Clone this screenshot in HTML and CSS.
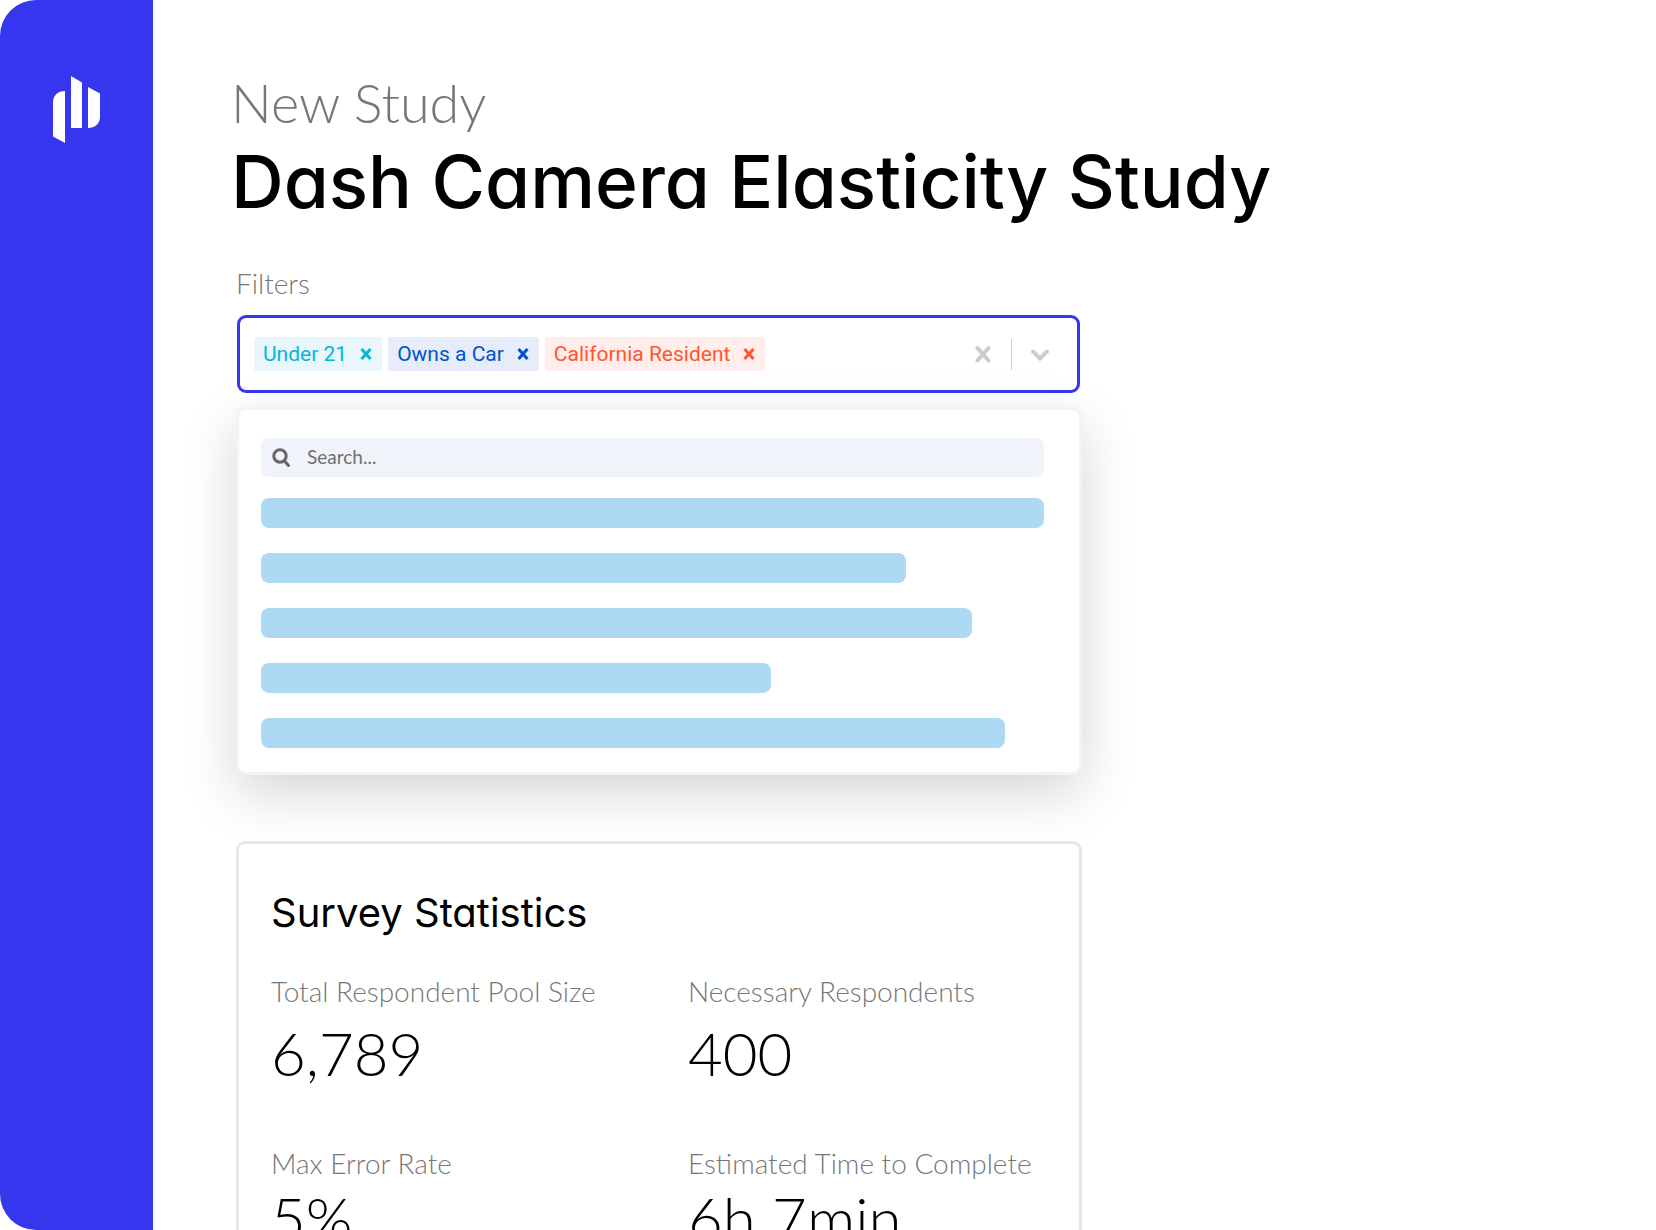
FILE: index.html
```html
<!DOCTYPE html>
<html lang="en">
<head>
<meta charset="utf-8">
<title>Dash Camera Elasticity Study</title>
<link rel="stylesheet" href="styles.css">
</head>
<body>
<div class="app">
  <nav class="sidebar" aria-label="Main">
    <a class="logo" href="#" aria-label="Home">
      <svg width="47" height="67" viewBox="0 0 47 67" fill="#fff" aria-hidden="true">
        <path d="M0 26C0 19.500 5 15 12 15V67L0 60.500Z"/>
        <path d="M18 0L29 6.500V52H18Z"/>
        <path d="M35 11L47 17.500V41C47 47.500 42 52 35 52Z"/>
      </svg>
    </a>
  </nav>
  <main class="main">
    <p class="eyebrow">New Study</p>
    <h1 class="title">Dash Camera Elasticity Study</h1>
    <div class="column">
      <p class="label" id="filters-label">Filters</p>
      <div class="select" role="group" aria-labelledby="filters-label">
        <ul class="chips">
          <li class="chip chip-teal">Under 21
            <button class="chip-remove" type="button" aria-label="Remove Under 21"><svg width="12" height="14" viewBox="0 0 12 14"><path d="M1.500 2L10.500 12M10.500 2L1.500 12"/></svg></button></li>
          <li class="chip chip-blue">Owns a Car
            <button class="chip-remove" type="button" aria-label="Remove Owns a Car"><svg width="12" height="14" viewBox="0 0 12 14"><path d="M1.500 2L10.500 12M10.500 2L1.500 12"/></svg></button></li>
          <li class="chip chip-red">California Resident
            <button class="chip-remove" type="button" aria-label="Remove California Resident"><svg width="12" height="14" viewBox="0 0 12 14"><path d="M1.500 2L10.500 12M10.500 2L1.500 12"/></svg></button></li>
        </ul>
        <div class="select-actions">
          <button class="icon-button" type="button" aria-label="Clear all filters"><svg width="18" height="18" viewBox="0 0 18 18"><path d="M3.500 3L14.500 15.500M14.500 3L3.500 15.500"/></svg></button>
          <span class="divider"></span>
          <button class="icon-button" type="button" aria-label="Toggle options"><svg width="18" height="18" viewBox="0 0 18 18"><path d="M2 6.500L9 13.500L16 6.500"/></svg></button>
        </div>
      </div>
      <div class="menu">
        <label class="search">
          <svg width="18" height="19" viewBox="0 0 18 19" aria-hidden="true"><circle cx="8" cy="8" r="6.200"/><path d="M12.300 12.800L16.500 17.500"/></svg>
          <input class="search-input" type="search" placeholder="Search..." aria-label="Search filters">
        </label>
        <ul class="options">
          <li class="option" style="width:100%"></li>
          <li class="option" style="width:82.400%"></li>
          <li class="option" style="width:90.800%"></li>
          <li class="option" style="width:65.100%"></li>
          <li class="option" style="width:95%"></li>
        </ul>
      </div>
      <section class="card">
        <h2 class="card-title">Survey Statistics</h2>
        <dl class="stats">
          <div class="stat"><dt class="label">Total Respondent Pool Size</dt><dd class="value">6,789</dd></div>
          <div class="stat"><dt class="label">Necessary Respondents</dt><dd class="value">400</dd></div>
          <div class="stat stat-tight"><dt class="label">Max Error Rate</dt><dd class="value">5%</dd></div>
          <div class="stat stat-tight"><dt class="label">Estimated Time to Complete</dt><dd class="value">6h 7min</dd></div>
        </dl>
      </section>
    </div>
  </main>
</div>
</body>
</html>
```
FILE: styles.css
```css
* { box-sizing: border-box; }
body, p, h1, h2, ul, dl, dd { margin: 0; padding: 0; }
ul { list-style: none; }
body { background: #fff; color: #000; font-family: Lato, "Open Sans", sans-serif; font-weight: 300; }
button { padding: 0; border: 0; background: none; cursor: pointer; }
svg { display: block; fill: none; stroke-linecap: round; }

.app { display: flex; height: 100vh; overflow: hidden; }
.sidebar {
  flex: 0 0 153px;
  display: flex;
  justify-content: center;
  align-items: flex-start;
  padding-top: 76px;
  background: #3636ee;
  border-radius: 36px 0 0 36px;
}
.logo svg { fill: #fff; }

.main { flex: 1; padding: 73px 80px 0 78px; }
.eyebrow { font-size: 54px; line-height: 60px; color: #777; }
.title {
  margin: 7px 0 43px;
  font: 500 73px/84px Inter, sans-serif;
  font-feature-settings: "cv11";
}
.column { max-width: 851px; padding: 0 0 0 5px; }
.label { font-size: 28px; line-height: 32px; color: #777; }

.select {
  display: flex;
  align-items: center;
  justify-content: space-between;
  height: 78px;
  margin: 16px 2px 14px 1px;
  padding: 0 28px 0 14px;
  border: 3px solid #3636ee;
  border-radius: 9px;
}
.chips { display: flex; gap: 6px; }
.chip {
  display: flex;
  align-items: center;
  gap: 13px;
  height: 34px;
  padding: 0 10px 0 9px;
  border-radius: 3px;
  font: 400 21px/34px Roboto, sans-serif;
}
.chip-remove { color: inherit; }
.chip-remove svg { stroke: currentColor; stroke-width: 3; stroke-linecap: butt; }
.chip-teal { color: #00b8d9; background: #e9f6fb; }
.chip-blue { color: #0052cc; background: #e6ecf9; }
.chip-red { color: #ff5630; background: #ffeeeb; }
.select-actions { display: flex; align-items: center; gap: 19px; }
.icon-button svg { stroke: #ccc; stroke-width: 4; }
.divider { width: 1px; height: 31px; background: #ccc; }

.menu {
  padding: 28px 35px 24px 22px;
  border: 3px solid #f0f4f9;
  border-radius: 9px;
  background: #fff;
  box-shadow: 0 18px 54px rgba(0, 0, 0, 0.170);
}
.search {
  display: flex;
  align-items: center;
  gap: 17px;
  height: 39px;
  padding: 0 11px 1px;
  border-radius: 8px;
  background: #f0f3f9;
}
.search svg { stroke: #666; stroke-width: 3; }
.search-input {
  flex: 1;
  min-width: 0;
  padding: 0;
  border: 0;
  outline: 0;
  background: none;
  font: 400 19px/24px Lato, sans-serif;
}
.search-input::placeholder { color: #707070; opacity: 1; }
.options { display: grid; gap: 25px; margin-top: 21px; }
.option { height: 30px; border-radius: 8px; background: #add9f4; }

.card {
  margin-top: 66px;
  padding: 46px 20px 40px 32px;
  border: 3px solid #e3e8eb;
  border-radius: 9px;
  background: #fff;
  position: relative;
}
.card-title {
  font: 400 40px/46px Inter, sans-serif;
  font-feature-settings: "cv11";
}
.stats {
  display: grid;
  grid-template-columns: 417px 1fr;
  row-gap: 58px;
  margin-top: 39px;
}
.stat { display: grid; gap: 10px; }
.stat-tight { gap: 3px; }
.value { font-size: 60px; line-height: 72px; }
```
